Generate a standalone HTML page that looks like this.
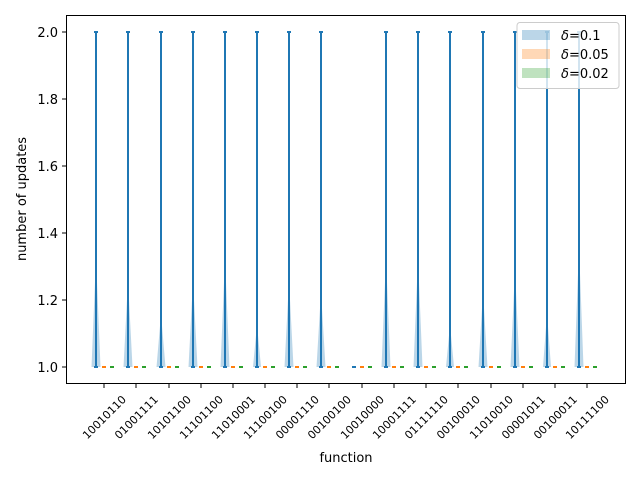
<!DOCTYPE html>
<html><head><style>body{margin:0;background:#fff}svg{display:block;font-family:"DejaVu Sans","Liberation Sans",sans-serif}</style></head><body>
<svg width="640" height="480" viewBox="0 0 640 480">
<g fill="#1f77b4" fill-opacity="0.3">
<path d="M91.5 367L95.5 270L96 32L96.5 270L100.5 367Z"/>
<path d="M123.5 367L127.5 290L128 32L128.5 290L132.5 367Z"/>
<path d="M156.5 367L160.5 320L161 32L161.5 320L165.5 367Z"/>
<path d="M188.5 367L192.5 290L193 32L193.5 290L197.5 367Z"/>
<path d="M220.5 367L224.5 270L225 32L225.5 270L229.5 367Z"/>
<path d="M253 367L256.5 330L257 32L257.5 330L261 367Z"/>
<path d="M284.5 367L288.5 290L289 32L289.5 290L293.5 367Z"/>
<path d="M316.5 367L320.5 300L321 32L321.5 300L325.5 367Z"/>
<path d="M381.5 367L385.5 270L386 32L386.5 270L390.5 367Z"/>
<path d="M413.5 367L417.5 270L418 32L418.5 270L422.5 367Z"/>
<path d="M446 367L449.5 330L450 32L450.5 330L454 367Z"/>
<path d="M478.5 367L482.5 300L483 32L483.5 300L487.5 367Z"/>
<path d="M510.5 367L514.5 280L515 32L515.5 280L519.5 367Z"/>
<path d="M543 367L546.5 320L547 32L547.5 320L551 367Z"/>
<path d="M574.5 367L578.5 260L579 32L579.5 260L583.5 367Z"/>
</g>
<g stroke="#1f77b4" stroke-width="2" fill="none">
<path d="M96 32V367M94 32H98M94 367H98M128 32V367M126 32H130M126 367H130M161 32V367M159 32H163M159 367H163M193 32V367M191 32H195M191 367H195M225 32V367M223 32H227M223 367H227M257 32V367M255 32H259M255 367H259M289 32V367M287 32H291M287 367H291M321 32V367M319 32H323M319 367H323M386 32V367M384 32H388M384 367H388M418 32V367M416 32H420M416 367H420M450 32V367M448 32H452M448 367H452M483 32V367M481 32H485M481 367H485M515 32V367M513 32H517M513 367H517M547 32V367M545 32H549M545 367H549M579 32V367M577 32H581M577 367H581M352 367H356"/>
</g>
<g stroke="#ff7f0e" stroke-width="2"><path d="M102 367H106M134 367H138M167 367H171M199 367H203M231 367H235M263 367H267M295 367H299M327 367H331M360 367H364M392 367H396M424 367H428M456 367H460M489 367H493M521 367H525M553 367H557M585 367H589"/></g>
<g stroke="#2ca02c" stroke-width="2"><path d="M110 367H114M142 367H146M175 367H179M207 367H211M239 367H243M271 367H275M303 367H307M335 367H339M368 367H372M400 367H404M432 367H436M464 367H468M497 367H501M529 367H533M561 367H565M593 367H597"/></g>
<rect x="66.5" y="15.5" width="559" height="368" fill="none" stroke="#000" stroke-width="1"/>
<g stroke="#000"><path d="M62 32H66M62 99H66M62 166H66M62 233H66M62 300H66M62 367H66M104 384V388M136 384V388M169 384V388M201 384V388M233 384V388M265 384V388M297 384V388M329 384V388M362 384V388M394 384V388M426 384V388M458 384V388M491 384V388M523 384V388M555 384V388M587 384V388"/></g>
<g font-size="13" text-anchor="end" fill="#000"><text x="58" y="37">2.0</text><text x="58" y="104">1.8</text><text x="58" y="171">1.6</text><text x="58" y="238">1.4</text><text x="58" y="305">1.2</text><text x="58" y="372">1.0</text></g>
<g font-size="11" text-anchor="middle" fill="#000">
<text transform="translate(107,420) rotate(-45)">10010110</text>
<text transform="translate(139,420) rotate(-45)">01001111</text>
<text transform="translate(172,420) rotate(-45)">10101100</text>
<text transform="translate(204,420) rotate(-45)">11101100</text>
<text transform="translate(236,420) rotate(-45)">11010001</text>
<text transform="translate(268,420) rotate(-45)">11100100</text>
<text transform="translate(300,420) rotate(-45)">00001110</text>
<text transform="translate(332,420) rotate(-45)">00100100</text>
<text transform="translate(365,420) rotate(-45)">10010000</text>
<text transform="translate(397,420) rotate(-45)">10001111</text>
<text transform="translate(429,420) rotate(-45)">01111110</text>
<text transform="translate(461,420) rotate(-45)">00100010</text>
<text transform="translate(494,420) rotate(-45)">11010010</text>
<text transform="translate(526,420) rotate(-45)">00001011</text>
<text transform="translate(558,420) rotate(-45)">00100011</text>
<text transform="translate(590,420) rotate(-45)">10111100</text>
</g>
<text x="346" y="462" font-size="13" text-anchor="middle">function</text>
<text transform="translate(26,199) rotate(-90)" font-size="13" text-anchor="middle">number of updates</text>
<rect x="517" y="22.5" width="102" height="66" rx="3" fill="#fff" fill-opacity="0.8" stroke="#ccc"/>
<rect x="522" y="30" width="28" height="10" fill="#1f77b4" fill-opacity="0.3"/>
<rect x="522" y="49" width="28" height="10" fill="#ff7f0e" fill-opacity="0.3"/>
<rect x="522" y="68" width="28" height="10" fill="#2ca02c" fill-opacity="0.3"/>
<g font-size="13"><text x="561" y="40"><tspan font-style="italic">δ</tspan>=0.1</text><text x="561" y="59"><tspan font-style="italic">δ</tspan>=0.05</text><text x="561" y="78"><tspan font-style="italic">δ</tspan>=0.02</text></g>
</svg>
</body></html>
